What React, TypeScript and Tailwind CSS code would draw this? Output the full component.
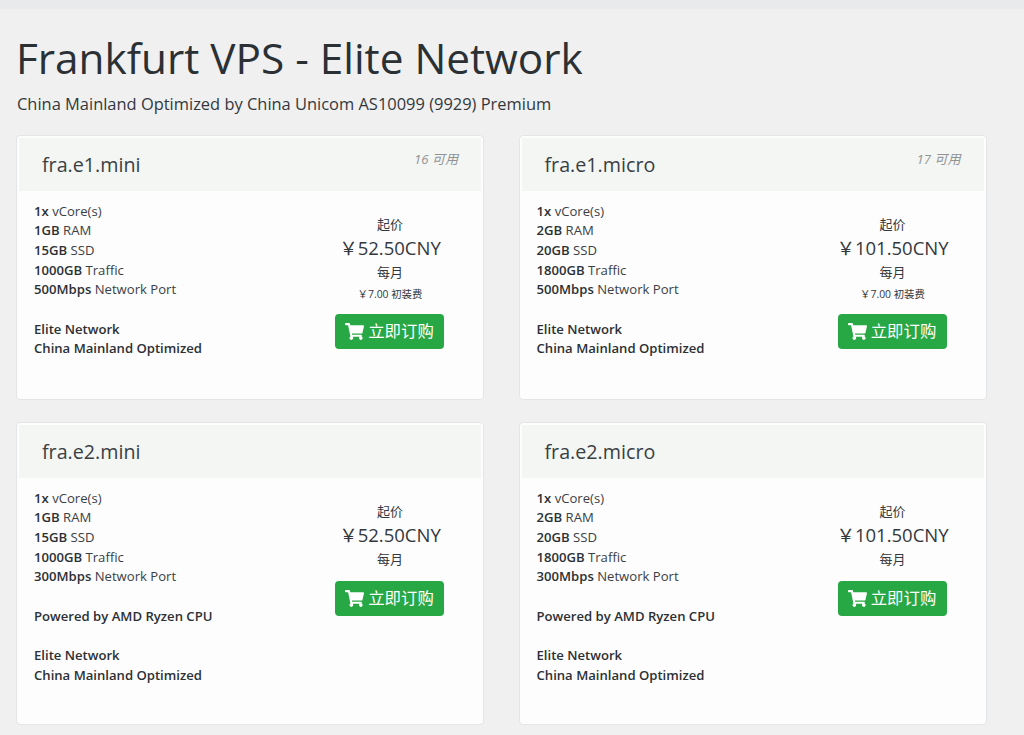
import { FaShoppingCart } from "react-icons/fa";

type Plan = {
  name: string;
  stock?: string;
  specs: [string, string][];
  notes: string[][];
  price: string;
  setup?: string;
};

const plans: Plan[] = [
  {
    name: "fra.e1.mini",
    stock: "16 可用",
    specs: [["1x", "vCore(s)"], ["1GB", "RAM"], ["15GB", "SSD"], ["1000GB", "Traffic"], ["500Mbps", "Network Port"]],
    notes: [["Elite Network", "China Mainland Optimized"]],
    price: "52.50CNY",
    setup: "7.00",
  },
  {
    name: "fra.e1.micro",
    stock: "17 可用",
    specs: [["1x", "vCore(s)"], ["2GB", "RAM"], ["20GB", "SSD"], ["1800GB", "Traffic"], ["500Mbps", "Network Port"]],
    notes: [["Elite Network", "China Mainland Optimized"]],
    price: "101.50CNY",
    setup: "7.00",
  },
  {
    name: "fra.e2.mini",
    specs: [["1x", "vCore(s)"], ["1GB", "RAM"], ["15GB", "SSD"], ["1000GB", "Traffic"], ["300Mbps", "Network Port"]],
    notes: [["Powered by AMD Ryzen CPU"], ["Elite Network", "China Mainland Optimized"]],
    price: "52.50CNY",
  },
  {
    name: "fra.e2.micro",
    specs: [["1x", "vCore(s)"], ["2GB", "RAM"], ["20GB", "SSD"], ["1800GB", "Traffic"], ["300Mbps", "Network Port"]],
    notes: [["Powered by AMD Ryzen CPU"], ["Elite Network", "China Mainland Optimized"]],
    price: "101.50CNY",
  },
];

function PlanCard({ plan }: { plan: Plan }) {
  return (
    <div className="rounded border border-[#e4e5e6] bg-[#fdfdfd] px-[2px] pt-[2px]">
      <div className="flex h-[53px] justify-between bg-[#f4f6f4] pl-[23px] pr-[23px]">
        <div className="pt-[13px] text-[19.7px] leading-[28px] text-[#3a3f44]">{plan.name}</div>
        <div className="pt-[11px] text-[13.12px] leading-[20px] text-[#8f9396] italic">{plan.stock}</div>
      </div>
      <div className="flex pt-[10.5px] pl-[15px]">
        <div className="w-[280px] text-[13.12px] leading-[19.7px] text-[#3a4046]">
          {plan.specs.map(([value, label]) => (
            <div key={label}>
              <b className="font-semibold text-[#2b3035]">{value}</b> {label}
            </div>
          ))}
          {plan.notes.map((group, i) => (
            <div key={i} className="mt-[19.7px] font-semibold text-[#2b3035]">
              {group.map((line) => (
                <div key={line}>{line}</div>
              ))}
            </div>
          ))}
        </div>
        <div className="flex w-[152px] flex-col items-center pt-[12px] text-[#33383d]">
          <div className="text-[13px] leading-[20px]">起价</div>
          <div className="mt-[1.5px] text-[18.5px] leading-[26px] whitespace-nowrap">￥{plan.price}</div>
          <div className="mt-[0.5px] text-[13px] leading-[20px]">每月</div>
          {plan.setup && <div className="mt-[2px] text-[10.4px] leading-[20px] whitespace-nowrap">￥{plan.setup} 初装费</div>}
          <button className={`${plan.setup ? "mt-[10.5px]" : "mt-[12.5px]"} mr-[1px] flex h-[35px] w-[109px] items-center justify-center gap-[4px] rounded bg-[#28a745] text-[16.4px] text-white`}>
            <FaShoppingCart className="h-[17px] w-[19px]" />
            立即订购
          </button>
        </div>
      </div>
    </div>
  );
}

export default function App() {
  return (
    <div className="h-[735px] overflow-hidden bg-[#f0f0f0] font-['Open_Sans','Noto_Sans_CJK_SC',sans-serif]">
      <div className="h-[9px] bg-[#e9eaec]" />
      <div className="pl-[16px] pt-[25px]">
        <h1 className="text-[42.3px] leading-[48px] text-[#2b3035]">Frankfurt VPS - Elite Network</h1>
        <p className="mt-[10px] ml-[1px] text-[16.45px] leading-[24px] text-[#33383d]">China Mainland Optimized by China Unicom AS10099 (9929) Premium</p>
        <div className="mt-[19px] grid w-[971px] grid-cols-[468px_468px] grid-rows-[265px_303px] gap-x-[34.5px] gap-y-[22px]">
          {plans.map((plan) => (
            <PlanCard key={plan.name} plan={plan} />
          ))}
        </div>
      </div>
    </div>
  );
}
